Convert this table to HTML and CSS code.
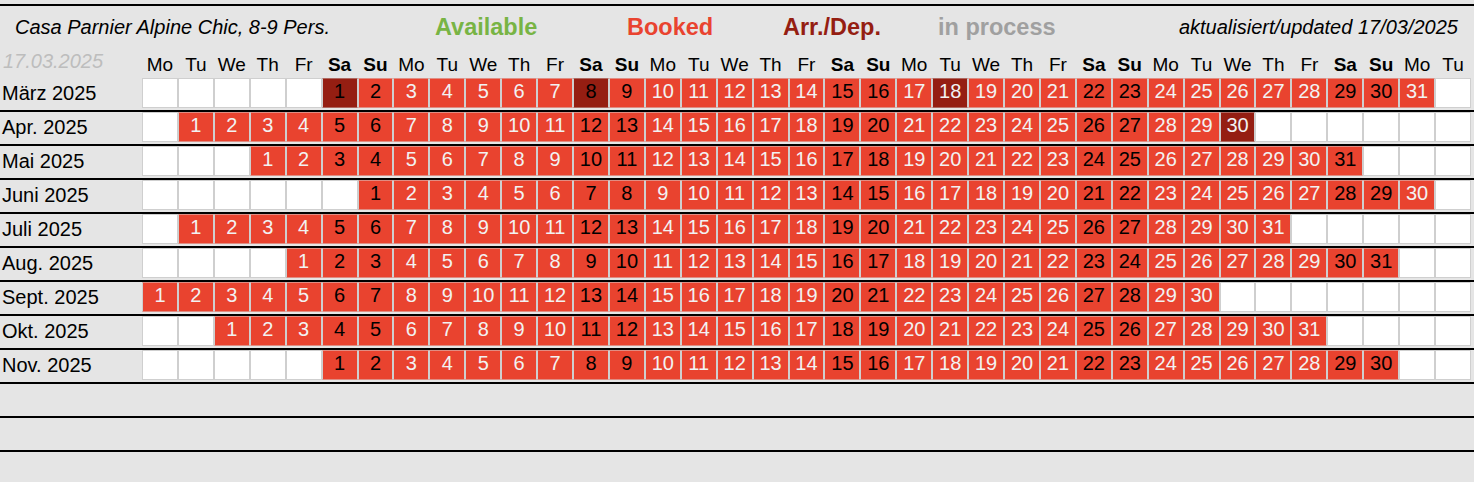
FILE: index.html
```html
<!DOCTYPE html>
<html lang="de">
<head>
    <meta charset="UTF-8">
    <title>Casa Parnier Alpine Chic - Belegung</title>
    <link rel="stylesheet" href="styles.css">
</head>
<body>
    <div class="page">
        <div class="title-bar">
            <span class="house">Casa Parnier Alpine Chic, 8-9 Pers.</span>
            <span class="legend available">Available</span>
            <span class="legend booked">Booked</span>
            <span class="legend arrdep">Arr./Dep.</span>
            <span class="legend inprocess">in process</span>
            <span class="updated">aktualisiert/updated 17/03/2025</span>
        </div>

        <div class="cal-grid head-row" id="headRow">
            <div class="stamp">17.03.2025</div>
        </div>

        <div id="months"></div>

        <div class="month empty"></div>
        <div class="month empty"></div>
    </div>

    <script src="calendar.js"></script>
</body>
</html>
```

FILE: styles.css
```css
* {
    box-sizing: border-box;
}

body {
    margin: 0;
    background-color: #e5e5e5;
    color: #000;
    font-family: 'Liberation Sans', Arial, Helvetica, sans-serif;
}

.page {
    margin-top: 4px;
    border-top: 2px solid #000;
}

/* title + legend */
.title-bar {
    display: flex;
    align-items: center;
    height: 42px;
    font-size: 20px;
}

.house {
    flex: 0 0 435px;
    padding-left: 15px;
    font-style: italic;
}

.legend {
    font-size: 23.5px;
    font-weight: bold;
}

.available {
    flex: 0 0 192px;
    color: #78b444;
}

.booked {
    flex: 0 0 156px;
    color: #e9432f;
}

.arrdep {
    flex: 0 0 155px;
    color: #951e12;
}

.inprocess {
    color: #a0a0a0;
}

.updated {
    margin-left: auto;
    padding-right: 16px;
    font-style: italic;
}

/* calendar grid */
.cal-grid {
    display: grid;
    grid-template-columns: 142px repeat(37, 1fr);
    width: 1471px;
}

.head-row {
    height: 30px;
}

.stamp {
    padding-left: 3px;
    font-size: 20px;
    font-style: italic;
    line-height: 26px;
    color: #bdbdbd;
}

.dn {
    padding-top: 4px;
    font-size: 19px;
    line-height: 26px;
    text-align: center;
}

.dn.we {
    font-weight: bold;
}

.month {
    border-bottom: 2px solid #000;
    padding-bottom: 5px;
}

.month.empty {
    height: 34px;
}

.month .cal-grid {
    height: 27px;
}

.month-label {
    padding-left: 2px;
    font-size: 20px;
    line-height: 30px;
    white-space: nowrap;
}

.day {
    background: #fff;
    border: 1px solid #cfcfcf;
    font-size: 20px;
    line-height: 25px;
    text-align: center;
    color: #f2f2f2;
}

.day.booked {
    background: #e9432f;
    border-top-color: rgba(215, 215, 215, 0.5);
    border-bottom-color: rgba(215, 215, 215, 0.5);
}

.day.arrdep {
    background: #951e12;
    border-top-color: rgba(215, 215, 215, 0.4);
    border-bottom-color: rgba(215, 215, 215, 0.4);
}

.day.we {
    color: #000;
}
```

FILE: calendar.js
```js
const dayNames = ['Mo', 'Tu', 'We', 'Th', 'Fr', 'Sa', 'Su'];

// label, weekday of the 1st (0 = Monday), number of days, arrival/departure days
const months = [
    ['März 2025', 5, 31, [1, 8, 18]],
    ['Apr. 2025', 1, 30, [30]],
    ['Mai 2025', 3, 31, []],
    ['Juni 2025', 6, 30, []],
    ['Juli 2025', 1, 31, []],
    ['Aug. 2025', 4, 31, []],
    ['Sept. 2025', 0, 30, []],
    ['Okt. 2025', 2, 31, []],
    ['Nov. 2025', 5, 30, []]
];

const headRow = document.getElementById('headRow');
for (let i = 0; i < 37; i++) {
    const dn = document.createElement('div');
    dn.className = 'dn' + (i % 7 > 4 ? ' we' : '');
    dn.textContent = dayNames[i % 7];
    headRow.appendChild(dn);
}

const container = document.getElementById('months');
months.forEach(function (m) {
    const row = document.createElement('div');
    row.className = 'month';

    const grid = document.createElement('div');
    grid.className = 'cal-grid';

    const label = document.createElement('div');
    label.className = 'month-label';
    label.textContent = m[0];
    grid.appendChild(label);

    for (let i = 0; i < 37; i++) {
        const day = i - m[1] + 1;
        const cell = document.createElement('div');
        cell.className = 'day';
        if (day >= 1 && day <= m[2]) {
            cell.textContent = day;
            cell.className += m[3].includes(day) ? ' arrdep' : ' booked';
            if (i % 7 > 4) {
                cell.className += ' we';
            }
        }
        grid.appendChild(cell);
    }

    row.appendChild(grid);
    container.appendChild(row);
});
```
